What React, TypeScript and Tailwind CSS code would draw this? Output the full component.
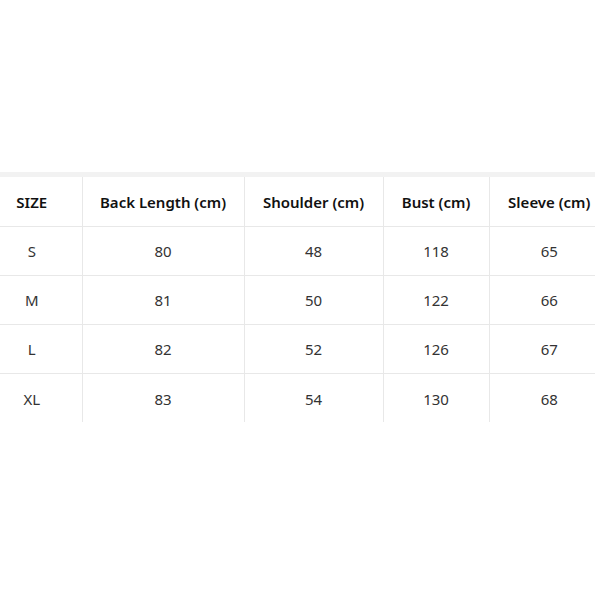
import React from "react";

const headers = ["SIZE", "Back Length (cm)", "Shoulder (cm)", "Bust (cm)", "Sleeve (cm)"];
const rows = [
  ["S", "80", "48", "118", "65"],
  ["M", "81", "50", "122", "66"],
  ["L", "82", "52", "126", "67"],
  ["XL", "83", "54", "130", "68"],
];
const widths = ["w-[100px]", "w-[162px]", "w-[139px]", "w-[106px]", "w-[120px]"];

export default function App() {
  return (
    <div className="w-[595px] h-[595px] bg-white overflow-hidden" style={{ fontFamily: '"Noto Sans", "Open Sans", sans-serif' }}>
      <div className="h-[172px]" />
      <div className="h-[5px] bg-[#f2f2f2]" />
      <table className="border-collapse table-fixed w-[627px] ml-[-18px]">
        <thead>
          <tr>
            {headers.map((h, i) => (
              <th
                key={h}
                className={`${widths[i]} h-[49px] p-0 pt-[2px] text-center text-[15px] font-semibold text-[#111] border-b border-[#e8e8e8] ${i > 0 ? "border-l" : ""}`}
              >
                {h}
              </th>
            ))}
          </tr>
        </thead>
        <tbody>
          {rows.map((r, ri) => (
            <tr key={ri}>
              {r.map((c, i) => (
                <td
                  key={i}
                  className={`h-[49px] p-0 pt-[2px] text-center text-[15px] text-[#333] border-[#e8e8e8] ${ri < rows.length - 1 ? "border-b" : ""} ${i > 0 ? "border-l" : ""}`}
                >
                  {c}
                </td>
              ))}
            </tr>
          ))}
        </tbody>
      </table>
    </div>
  );
}
